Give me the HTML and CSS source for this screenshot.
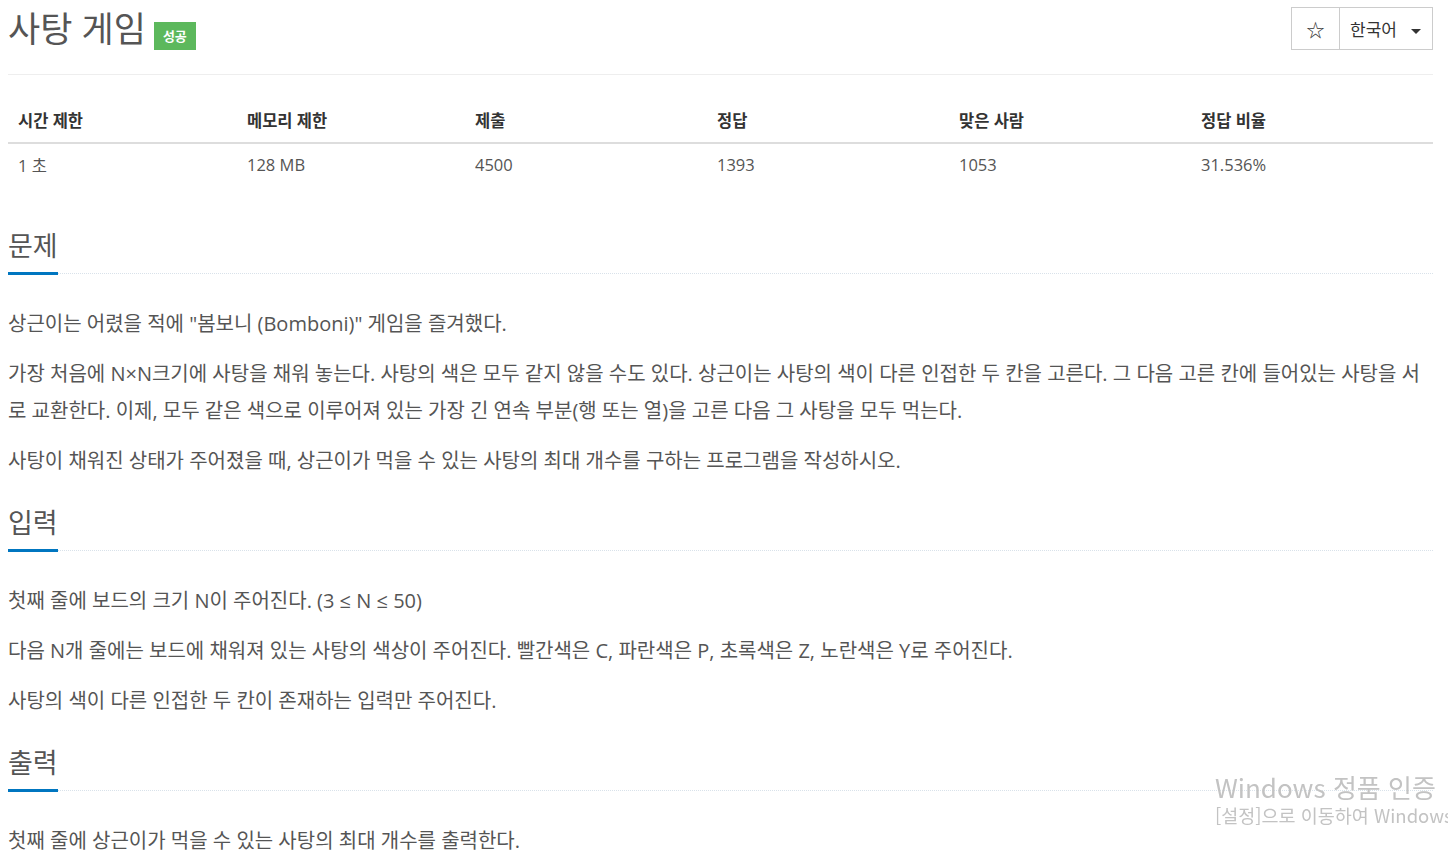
FILE: index.html
```html
<!DOCTYPE html>
<html lang="ko">
<head>
<meta charset="utf-8">
<link rel="stylesheet" href="styles.css">
</head>
<body>
<div class="page">
  <div class="header">
    <h1 class="title">사탕 게임 <span class="badge">성공</span></h1>
    <div class="btns">
      <button class="btn star">☆</button>
      <button class="btn lang">한국어 <span class="caret"></span></button>
    </div>
  </div>
  <table class="info">
    <thead>
      <tr><th class="c1">시간 제한</th><th class="c2">메모리 제한</th><th class="c3">제출</th><th class="c4">정답</th><th class="c5">맞은 사람</th><th>정답 비율</th></tr>
    </thead>
    <tbody>
      <tr><td>1 초</td><td>128 MB</td><td>4500</td><td>1393</td><td>1053</td><td>31.536%</td></tr>
    </tbody>
  </table>

  <section class="sec first">
    <div class="headline"><h2>문제</h2></div>
    <div class="text">
      <p>상근이는 어렸을 적에 "봄보니 (Bomboni)" 게임을 즐겨했다.</p>
      <p>가장 처음에 N×N크기에 사탕을 채워 놓는다. 사탕의 색은 모두 같지 않을 수도 있다. 상근이는 사탕의 색이 다른 인접한 두 칸을 고른다. 그 다음 고른 칸에 들어있는 사탕을 서로 교환한다. 이제, 모두 같은 색으로 이루어져 있는 가장 긴 연속 부분(행 또는 열)을 고른 다음 그 사탕을 모두 먹는다.</p>
      <p>사탕이 채워진 상태가 주어졌을 때, 상근이가 먹을 수 있는 사탕의 최대 개수를 구하는 프로그램을 작성하시오.</p>
    </div>
  </section>

  <section class="sec">
    <div class="headline"><h2>입력</h2></div>
    <div class="text">
      <p>첫째 줄에 보드의 크기 N이 주어진다. (3 ≤ N ≤ 50)</p>
      <p>다음 N개 줄에는 보드에 채워져 있는 사탕의 색상이 주어진다. 빨간색은 C, 파란색은 P, 초록색은 Z, 노란색은 Y로 주어진다.</p>
      <p>사탕의 색이 다른 인접한 두 칸이 존재하는 입력만 주어진다.</p>
    </div>
  </section>

  <section class="sec">
    <div class="headline"><h2>출력</h2></div>
    <div class="text">
      <p>첫째 줄에 상근이가 먹을 수 있는 사탕의 최대 개수를 출력한다.</p>
    </div>
  </section>
</div>
<div class="watermark">
  <div class="wm1">Windows 정품 인증</div>
  <div class="wm2">[설정]으로 이동하여 Windows</div>
</div>
</body>
</html>
```
FILE: styles.css
```css
html, body { margin: 0; padding: 0; background: #fff; }
body {
  font-family: "Open Sans", "Noto Sans CJK KR", sans-serif;
  color: #555;
  overflow: hidden;
}
.page { padding: 0 15px 0 8px; }
.header {
  display: flex;
  justify-content: space-between;
  align-items: flex-start;
  border-bottom: 1px solid #eee;
  padding-top: 7px;
  height: 75px;
  box-sizing: border-box;
}
.title {
  margin: 0;
  font-size: 35px;
  font-weight: 400;
  line-height: 44px;
  color: #555;
  display: flex;
  align-items: flex-start;
  gap: 8px;
}
.badge {
  background: #5cb85c;
  color: #fff;
  font-size: 13px;
  font-weight: 700;
  padding: 0 9px;
  line-height: 28px;
  height: 28px;
  margin-top: 15px;
}
.btns { display: flex; margin-top: 0; }
.btn {
  background: #fff;
  border: 1px solid #ccc;
  height: 43px;
  font-family: "Open Sans", "Noto Sans CJK KR", sans-serif;
  font-size: 17px;
  color: #333;
  padding: 0;
}
.star { width: 49px; font-size: 18px; }
.lang { width: 94px; margin-left: -1px; text-align: left; padding-left: 10px; }
.caret {
  display: inline-block;
  width: 0; height: 0;
  border-top: 5px solid #333;
  border-left: 5px solid transparent;
  border-right: 5px solid transparent;
  vertical-align: middle;
  margin-left: 10px;
}
.info {
  width: 100%;
  border-collapse: collapse;
  margin-top: 23px;
  font-size: 16.5px;
}
.info th, .info td { text-align: left; padding: 0 10px; }
.info th {
  font-weight: 700;
  color: #333;
  height: 44px;
  border-bottom: 2px solid #ddd;
  vertical-align: middle;
}
.info td { height: 41px; color: #555; }
.c1 { width: 209px; }
.c2 { width: 208px; }
.c3, .c4, .c5 { width: 222px; }
.sec { margin-top: 24px; }
.sec.first { margin-top: 41px; }
.headline {
  display: flex;
  border-bottom: 1px dotted #d9e2ea;
}
.headline h2 {
  margin: 0 0 -2px;
  font-size: 27px;
  font-weight: 400;
  line-height: 40px;
  padding-bottom: 6px;
  border-bottom: 3px solid #0076c0;
  color: #555;
}
.text { padding-top: 31px; }
.text p {
  margin: 0 0 13px;
  font-size: 20px;
  line-height: 37px;
}
.watermark {
  position: fixed;
  left: 1215px;
  top: 772px;
  color: #c3c3c3;
  font-family: "Noto Sans CJK KR", sans-serif;
  white-space: nowrap;
}
.wm1 { font-size: 26px; line-height: 30px; }
.wm2 { font-size: 18.5px; line-height: 26px; }
```
